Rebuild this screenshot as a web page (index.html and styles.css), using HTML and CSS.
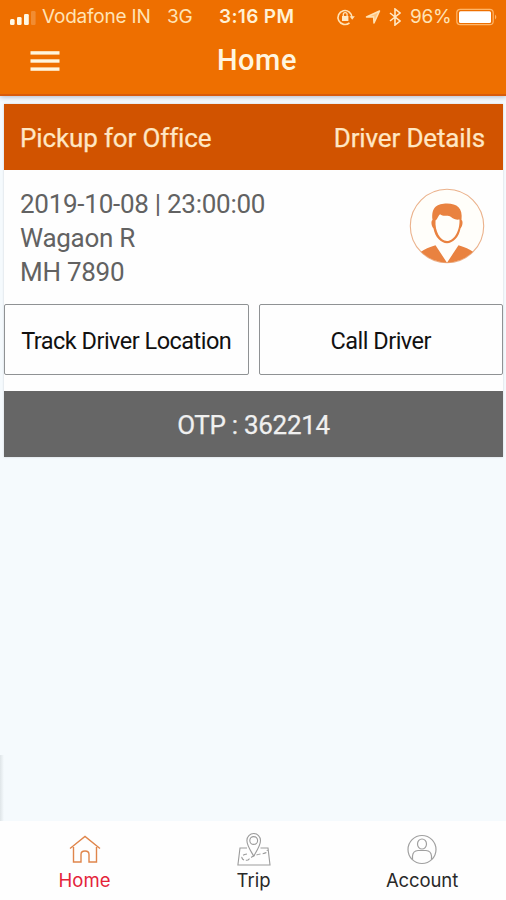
FILE: index.html
```html
<!DOCTYPE html>
<html lang="en">
<head>
<meta charset="utf-8">
<title>Home</title>
<link rel="stylesheet" href="styles.css">
</head>
<body>
<div class="app">
  <header class="header">
    <div class="status">
      <svg class="signal" width="28" height="18" viewBox="0 0 28 18" fill="#fff8e4"><rect x="1" y="11" width="4.6" height="6" rx="1.5"/><rect x="8" y="9" width="4.6" height="8" rx="1.3"/><rect x="15" y="6" width="4.8" height="11" rx="1.3"/><rect x="22" y="3" width="4.6" height="14" rx="1.3" opacity=".22"/></svg>
      <span class="carrier">Vodafone IN</span>
      <span class="network">3G</span>
      <span class="clock">3:16 PM</span>
      <svg class="lock" width="20" height="18" viewBox="0 0 20 18" fill="none" stroke="#ffe3b6" stroke-width="1.6"><path d="M13.5 14.9A7 7 0 1 1 16 9.5"/><path d="M13.6 8.3h5.2l-2.6 3.5z" fill="#ffe3b6" stroke="none"/><rect x="6" y="8" width="6.4" height="5" fill="#ffe9c6" stroke="none"/><path d="M7.3 8V6.5a1.9 1.9 0 0 1 3.8 0V8" stroke-width="1.3"/></svg>
      <svg class="arrow" width="16" height="16" viewBox="0 0 16 16"><path d="M1.500 8 14.500 2 9 14 8.600 7.800z" fill="#ffc681" stroke="#ffe3b6" stroke-width="1.500" stroke-linejoin="round"/></svg>
      <svg class="bluetooth" width="12" height="18" viewBox="0 0 12 18"><path d="m1 5 10 8-5 4V1l5 4-10 8" fill="none" stroke="#ffe9c6" stroke-width="1.6"/></svg>
      <span class="percent">96%</span>
      <svg class="battery" width="42" height="18" viewBox="0 0 42 18"><rect x=".8" y="1.3" width="36.4" height="15.4" rx="3.5" fill="none" stroke="#ffb669" stroke-width="1.2"/><rect x="3" y="3.2" width="32" height="11.800" rx="1.5" fill="#fff"/><path d="M39 6.5q2.6 2.5 0 5z" fill="#ffb669"/></svg>
    </div>
    <div class="nav">
      <svg class="menu" width="30" height="22" viewBox="0 0 30 22" fill="#fff5dd"><rect x=".5" y="1.2" width="29" height="3.4"/><rect x=".5" y="9.3" width="29" height="3.4"/><rect x=".5" y="17.4" width="29" height="3.4"/></svg>
      <h1 class="title">Home</h1>
    </div>
  </header>

  <main class="main">
    <section class="card">
      <div class="card-head"><span class="pickup">Pickup for Office</span><span class="details">Driver Details</span></div>
      <div class="trip">
        <div class="trip-info"><div class="when">2019-10-08 | 23:00:00</div><div class="car">Wagaon R</div><div class="plate">MH 7890</div></div>
        <svg class="avatar" width="76" height="76" viewBox="0 0 76 76">
          <circle cx="38" cy="38" r="36.7" fill="#fffefa" stroke="#ebb28c" stroke-width="1.1"/>
          <path d="M12 63.8Q17 60 26.5 57.2L38 74.7Q23.500 74.500 12 63.800ZM64 63.800Q59 60 49.500 57.200L38 74.700Q52.500 74.500 64 63.800Z" fill="#e98240"/>
          <path d="M23.5 32C22 19 28.500 15.600 38 15.600C48 15.600 54 20 52.500 32C54.400 33 53.500 38.500 51.500 40.500C50 49 44 55.200 38 55.200C32 55.200 26 49 24.500 40.500C22.500 38.500 21.600 33 23.500 32Z" fill="#e98240"/>
          <path d="M26.500 32.500C28.500 31 29 28 31 26.200C35 29.500 38 26.200 42 29C45 31.300 47.500 32 50.500 31.500C51 43 45 53 38 53C31 53 25.800 43 26.500 32.500Z" fill="#fffefa"/>
        </svg>
      </div>
      <div class="actions"><button class="btn track">Track Driver Location</button><button class="btn call">Call Driver</button></div>
      <div class="otp"><span>OTP : 362214</span></div>
    </section>
    <div class="edge"></div>
  </main>

  <nav class="tabs">
    <a class="tab active">
      <svg width="34" height="34" viewBox="0 0 34 34" fill="none" stroke="#df854b" stroke-width="1.4"><path d="M2 16.500 17 4.500 32 16.500M5.500 15V30H13V22.500Q13 19 17 19Q21 19 21 22.500V30H28.500V15"/></svg>
      <span class="home-label">Home</span>
    </a>
    <a class="tab">
      <svg width="34" height="34" viewBox="0 0 34 34" fill="none" stroke="#9b9b9b" stroke-width="1.100"><path d="M10 16H3L.9 33H33L31 16H23.500"/><path d="M16.700 24C13.500 18.500 9.900 13.500 9.900 8.500A6.800 7 0 0 1 23.500 8.500C23.500 13.500 20 18.500 16.700 24Z"/><circle cx="16.700" cy="8.500" r="3.900"/><path d="M10 22Q4 23 5 26T11 28Q16 23 24 22T30 18" stroke-dasharray="4 2"/></svg>
      <span class="trip-label">Trip</span>
    </a>
    <a class="tab">
      <svg width="34" height="34" viewBox="0 0 34 34" fill="none" stroke="#a0a0a0" stroke-width="1.200"><circle cx="17" cy="17.500" r="14"/><ellipse cx="17" cy="12" rx="4.500" ry="5"/><path d="M7.500 27.500V24Q8 18.800 13 18.500H21Q26 18.800 26.500 24V27.500"/></svg>
      <span class="account-label">Account</span>
    </a>
  </nav>
</div>
</body>
</html>
```
FILE: styles.css
```css
* { box-sizing: border-box; }
body { margin: 0; font-family: Roboto, "Liberation Sans", sans-serif; }
.app { width: 506px; height: 900px; display: flex; flex-direction: column; background: #f5fafd; overflow: hidden; }
.header { height: 96px; flex: none; background: #ee6f00; border-bottom: 2px solid #d85b0b; box-shadow: 0 1px 5px #aeb6ca; }
.status { height: 34px; display: flex; align-items: center; padding-left: 9px; color: #ffe3b6; font: 19px/34px Inter, sans-serif; white-space: nowrap; }
.status svg { flex: none; }
.status span { flex: none; }
.signal { margin-top: -1px; }
.carrier { width: 125px; padding-left: 5px; letter-spacing: -.2px; }
.network { width: 52px; padding-left: 5px; letter-spacing: -.3px; }
.clock { width: 122px; padding-left: 5px; font-weight: 600; color: #fff1d5; letter-spacing: .35px; }
.arrow { margin-left: 9px; }
.bluetooth { margin-left: 8px; }
.percent { width: 46px; margin-left: 9px; letter-spacing: -.3px; }
.nav { height: 60px; display: grid; grid-template-columns: 96px 1fr 88px; align-items: center; padding-bottom: 8px; }
.menu { margin: 2px 0 0 30px; }
.title { margin: 0; text-align: center; font-size: 29px; font-weight: 500; color: #fff5df; letter-spacing: .6px; }
.main { flex: 1; display: flex; flex-direction: column; justify-content: space-between; padding: 8px 3px 0 4px; }
.card { background: #fefefe; box-shadow: 0 0 2px #cdd2d8; }
.card-head { height: 66px; display: flex; align-items: center; justify-content: space-between; padding: 2px 18px 0 16px; color: #ffe7c4; background: #d15300; font-size: 26px; letter-spacing: -.14px; -webkit-text-stroke: .25px; }
.trip { height: 134px; display: flex; justify-content: space-between; padding: 17px 18px 0 16px; }
.trip-info { color: #626262; font-size: 26px; line-height: 34px; letter-spacing: -.27px; }
.avatar { margin-top: 1px; }
.actions { display: grid; grid-template-columns: 1fr 1fr; gap: 10px; height: 87px; padding-bottom: 16px; }
.btn { padding: 2px 0 0; border: 1px solid #8f9294; border-radius: 2px; background: #fefefe; color: #111; font: 23.5px Roboto, sans-serif; letter-spacing: -.52px; white-space: nowrap; }
.otp { height: 66px; display: flex; align-items: center; justify-content: center; padding-top: 2px; background: #666; color: #f0f0f0; font-size: 26px; letter-spacing: -.3px; -webkit-text-stroke: .25px; }
.edge { width: 4px; height: 66px; margin-left: -4px; background: linear-gradient(90deg, #dfe5e8, #f5fafd); }
.tabs { height: 79px; flex: none; display: grid; grid-template-columns: 169px 169px 168px; background: #fefefe; }
.tab { display: flex; flex-direction: column; align-items: center; padding-top: 11px; color: #292929; font: 18.5px/28px Inter, sans-serif; }
.tab svg { flex: none; }
.account-label { letter-spacing: -.1px; }
.tab.active { color: #e42339; }
```
